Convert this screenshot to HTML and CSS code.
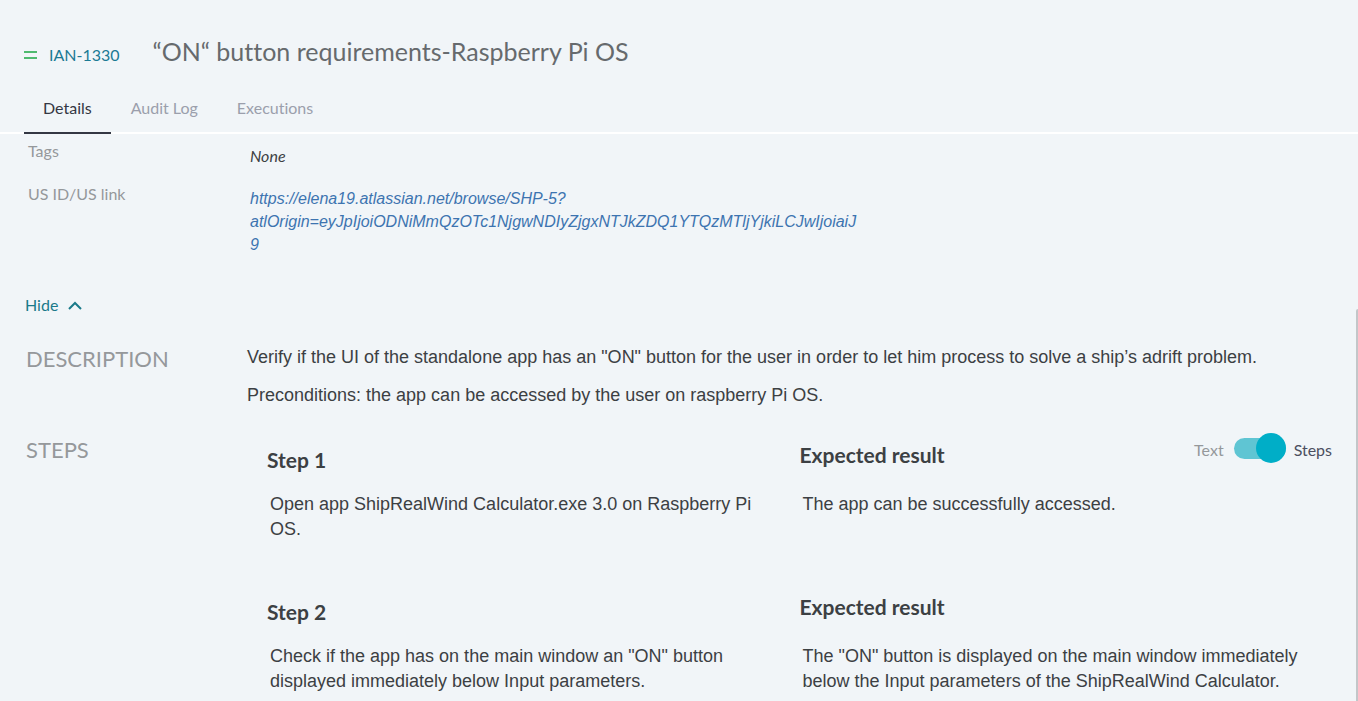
FILE: index.html
```html
<!DOCTYPE html>
<html lang="en">
<head>
<meta charset="utf-8">
<title>IAN-1330</title>
<link rel="stylesheet" href="styles.css">
</head>
<body>
<main class="page">
  <header class="header">
    <div class="title-row">
      <svg class="priority" width="13" height="8" viewBox="0 0 13 8" aria-hidden="true"><path d="M0 1h13M0 7h13" stroke="#4fba6f" stroke-width="2"/></svg>
      <a class="issue-key" href="#">IAN-1330</a>
      <h1 class="title">“ON“ button requirements-Raspberry Pi OS</h1>
    </div>
    <nav class="tabs">
      <button class="tab tab-active" type="button">Details</button>
      <button class="tab" type="button">Audit Log</button>
      <button class="tab" type="button">Executions</button>
    </nav>
  </header>

  <section class="fields">
    <div class="field">
      <div class="field-label">Tags</div>
      <div class="field-value">None</div>
    </div>
    <div class="field">
      <div class="field-label">US ID/US link</div>
      <a class="field-link" href="#">https://elena19.atlassian.net/browse/SHP-5?<wbr>atlOrigin=eyJpIjoiODNiMmQzOTc1NjgwNDIyZjgxNTJkZDQ1YTQzMTljYjkiLCJwIjoiaiJ9</a>
    </div>
    <button class="hide" type="button">Hide
      <svg width="14" height="9" viewBox="0 0 14 9" aria-hidden="true"><path d="M1 8l6-6 6 6" fill="none" stroke="currentColor" stroke-width="2"/></svg>
    </button>
  </section>

  <section class="block description">
    <h2 class="block-label">DESCRIPTION</h2>
    <div class="description-text">
      <p>Verify if the UI of the standalone app has an "ON" button for the user in order to let him process to solve a ship’s adrift problem.</p>
      <p>Preconditions: the app can be accessed by the user on raspberry Pi OS.</p>
    </div>
  </section>

  <section class="block steps-block">
    <h2 class="block-label">STEPS</h2>
    <div class="steps">
      <article class="step">
        <div class="step-action">
          <h3>Step 1</h3>
          <p>Open app ShipRealWind Calculator.exe 3.0 on Raspberry Pi OS.</p>
        </div>
        <div class="step-result">
          <div class="result-head">
            <h3>Expected result</h3>
            <label class="mode">
              <span class="mode-off">Text</span>
              <input class="switch" type="checkbox" role="switch" checked>
              <span class="mode-on">Steps</span>
            </label>
          </div>
          <p>The app can be successfully accessed.</p>
        </div>
      </article>
      <article class="step">
        <div class="step-action">
          <h3>Step 2</h3>
          <p>Check if the app has on the main window an "ON" button displayed immediately below Input parameters.</p>
        </div>
        <div class="step-result">
          <div class="result-head">
            <h3>Expected result</h3>
          </div>
          <p>The "ON" button is displayed on the main window immediately below the Input parameters of the ShipRealWind Calculator.</p>
        </div>
      </article>
    </div>
  </section>
  <div class="scroll-thumb"></div>
</main>
</body>
</html>
```

FILE: styles.css
```css
* {
  box-sizing: border-box;
}

body {
  margin: 0;
  background: #f1f5f8;
  color: #3c4043;
  font: 18px/25px "Liberation Sans", Arial, sans-serif;
  font-variant-ligatures: none;
}

h1, h2, h3, p {
  margin: 0;
}

button {
  padding: 0;
  border: 0;
  background: none;
  cursor: pointer;
}

a {
  text-decoration: none;
}

.page {
  position: relative;
  min-height: 100vh;
}

.header {
  padding: 32px 24px 0;
  border-bottom: 2px solid #fff;
}

.title-row {
  display: flex;
  align-items: center;
  height: 38px;
}

.priority {
  flex: none;
  margin: 8px 12px 0 0;
}

.issue-key {
  margin: 8px 33px 0 0;
  color: #1b7a94;
  font: 16px/24px Lato, sans-serif;
}

.title {
  color: #666a6d;
  font: 25px/38px Lato, sans-serif;
  font-variant-ligatures: none;
}

.tabs {
  display: flex;
  gap: 1px;
  margin-top: 14px;
}

.tab {
  height: 50px;
  padding: 0 19px 2px;
  margin-bottom: -2px;
  color: #9b9fac;
  font: 16px/24px Lato, sans-serif;
  font-variant-ligatures: none;
}

.tab-active {
  color: #343743;
  border-bottom: 2px solid #343743;
  padding-bottom: 0;
}

.fields {
  padding: 5px 24px 0 28px;
}

.field {
  display: grid;
  grid-template-columns: 222px minmax(0, 612px);
  margin-bottom: 14px;
}

.field-label {
  color: #95989b;
  font: 16px/24px Lato, sans-serif;
}

.field-value {
  margin-top: 5px;
  font: italic 16px/24px Lato, sans-serif;
}

.field-link {
  margin-top: 5px;
  color: #3d74b0;
  font: italic 16px/23px "Liberation Sans", Arial, sans-serif;
  overflow-wrap: anywhere;
}

.hide {
  display: flex;
  align-items: center;
  gap: 10px;
  margin: 37px 0 0 -3px;
  color: #1b7a8a;
  font: 16px/24px Lato, sans-serif;
}

.block {
  display: grid;
  grid-template-columns: 221px minmax(0, 1fr);
  padding: 0 26px;
}

.block-label {
  color: #95989b;
  font: 22px/32px Lato, sans-serif;
}

.description {
  margin-top: 26px;
}

.description-text {
  display: grid;
  gap: 13px;
  padding-top: 2px;
}

.steps-block {
  margin-top: 26px;
}

.steps {
  display: grid;
  gap: 49px;
  padding: 5px 0 8px 20px;
}

.step {
  display: grid;
  grid-template-columns: 1fr 1fr;
}

.step h3 {
  font: bold 21px/32px Lato, sans-serif;
}

.step p {
  padding: 0 28px 0 3px;
}

.step-action h3 {
  padding: 5px 0 0;
}

.step-action p {
  margin-top: 16px;
}

.result-head {
  display: flex;
  justify-content: space-between;
  height: 32px;
}

.step-result p {
  margin-top: 21px;
}

.mode {
  display: flex;
  align-items: center;
  height: 22px;
  color: #4b4f60;
  font: 16px/24px Lato, sans-serif;
}

.mode-off {
  color: #95989b;
}

.switch {
  position: relative;
  appearance: none;
  width: 52px;
  height: 21px;
  margin: 0 8px 3px 10px;
  border-radius: 11px;
  background: #5fc5d3;
}

.switch::after {
  content: "";
  position: absolute;
  top: -5px;
  right: 0;
  width: 30px;
  height: 30px;
  border-radius: 50%;
  background: #00aec7;
}

.scroll-thumb {
  position: absolute;
  top: 309px;
  right: 0;
  bottom: 0;
  width: 2px;
  border-radius: 2px 0 0 0;
  background: #c3c6c9;
}
```
